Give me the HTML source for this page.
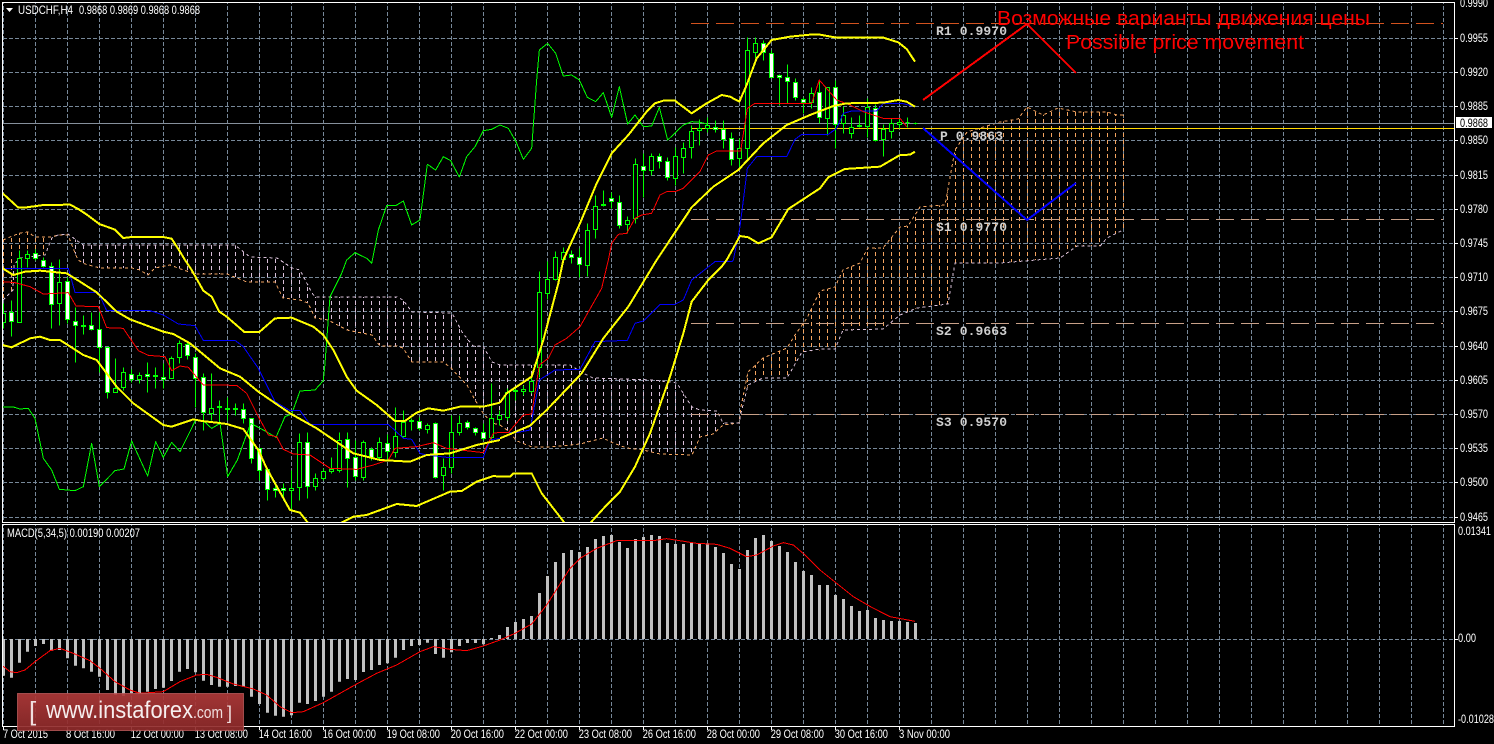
<!DOCTYPE html>
<html lang="en">
<head>
<meta charset="utf-8">
<title>USDCHF,H4</title>
<style>
html,body{margin:0;padding:0;background:#000;width:1494px;height:744px;overflow:hidden}
svg{display:block}
text{font-family:"Liberation Sans",sans-serif}
.ax{font-size:12px;fill:#fff}
.pv{font-family:"Liberation Mono",monospace;font-size:13px;font-weight:bold;fill:#d0d0d0}
polyline,.n{fill:none}
polyline{shape-rendering:crispEdges}
.y{stroke:#ff0;stroke-width:6;stroke-linejoin:round}
.r{stroke:#f00;stroke-width:3;stroke-linejoin:round}
.b{stroke:#00f;stroke-width:3;stroke-linejoin:round}
.g{stroke:#0f0;stroke-width:3;stroke-linejoin:round}
</style>
</head>
<body>
<svg width="1494" height="744" viewBox="0 0 1494 744" xmlns="http://www.w3.org/2000/svg">
<defs>
<pattern id="vg" width="32" height="6" patternUnits="userSpaceOnUse"><rect x="3" y="0" width="1" height="4" fill="#778899"/></pattern>
<pattern id="ht" width="8" height="7" patternUnits="userSpaceOnUse"><rect x="3" y="0" width="1" height="4" fill="#d8bfd8"/></pattern>
<pattern id="hs" width="8" height="7" patternUnits="userSpaceOnUse"><rect x="3" y="0" width="1" height="4" fill="#f4a460"/></pattern>
<clipPath id="mc"><rect x="3" y="3" width="1451" height="519"/></clipPath>
<clipPath id="dc"><rect x="3" y="525" width="1451" height="201"/></clipPath>
<linearGradient id="lg" x1="0" y1="0" x2="0" y2="1"><stop offset="0" stop-color="#b03a3a"/><stop offset="1" stop-color="#8e2a2a"/></linearGradient>
</defs>
<rect width="1494" height="744" fill="#000"/>

<!-- grid -->
<rect x="3" y="3" width="1451" height="519" fill="url(#vg)"/>
<rect x="3" y="525" width="1451" height="201" fill="url(#vg)"/>
<path d="M3 38.5H1454M3 72.5H1454M3 106.5H1454M3 140.5H1454M3 175.5H1454M3 209.5H1454M3 243.5H1454M3 277.5H1454M3 311.5H1454M3 346.5H1454M3 380.5H1454M3 414.5H1454M3 448.5H1454M3 482.5H1454M3 517.5H1454M3 639.5H1454" stroke="#778899" stroke-dasharray="4 2" class="n"/>

<g clip-path="url(#mc)">
<!-- cloud hatch -->
<polygon fill="url(#hs)" points="3,240 10,237 20,233 28,232 35,237 52,237 52,238 45,255 20,258 14,265 13,290 3,300"/>
<polygon fill="url(#ht)" points="52,237 58,235 68,234 83,245 235,245 250,257 277,258 292,268 300,270 312,293 315,297 397,297 403,300 412,312 452,313 462,332 473,346 483,346 492,362 500,365 570,365 583,373 593,378 653,380 677,383 683,393 692,407 700,410 717,411 723,423 739,423 723,425 713,434 700,437 692,455 660,454 643,450 627,448 613,443 603,438 580,444 550,447 532,447 517,441 507,430 500,425 492,423 483,413 475,400 467,385 450,367 443,362 412,362 403,348 397,346 380,346 372,335 347,330 328,320 315,318 308,303 300,300 283,298 275,282 247,282 227,274 195,274 178,268 170,265 155,268 148,275 140,270 132,268 100,268 85,264 78,260 75,253 68,234"/>
<polygon fill="url(#hs)" points="739,423 741,407 748,372 763,358 787,348 795,335 807,318 820,291 835,287 843,270 860,263 863,257 868,248 883,248 900,227 908,226 920,207 945,205 955,150 967,132 1000,122 1018,119 1027,107 1043,115 1058,108 1077,112 1107,112 1117,115 1124,115 1124,230 1107,238 1100,246 1077,246 1060,258 1000,263 955,263 948,304 917,308 900,315 883,329 843,330 835,349 802,352 787,378 763,378 748,385 741,413"/>
<!-- cloud edges -->
<polyline stroke="#f4a460" stroke-dasharray="3 3" points="3,240 10,237 20,233 28,232 35,237 43,237 52,237 58,235 68,235 75,253 78,260 85,264 100,268 132,268 140,270 148,275 155,268 170,265 178,268 195,274 227,274 247,282 275,282 283,298 300,300 308,303 315,318 328,320 347,330 372,335 380,346 397,346 403,348 412,362 443,362 450,367 467,385 475,400 483,413 492,423 500,425 507,430 517,441 532,447 550,447 580,444 603,438 613,443 627,448 643,450 660,454 692,455 700,437 713,434 723,425 739,423 741,407 748,372 763,358 787,348 795,335 807,318 820,291 835,287 843,270 860,263 863,257 868,248 883,248 900,227 908,226 920,207 945,205 955,150 967,132 1000,122 1018,119 1027,107 1043,115 1058,108 1077,112 1107,112 1117,115 1123,115"/>
<polyline stroke="#d8bfd8" stroke-dasharray="3 3" points="3,300 13,290 14,265 20,258 45,255 52,238 58,235 68,234 83,245 235,245 250,257 277,258 292,268 300,270 312,293 315,297 397,297 403,300 412,312 452,313 462,332 473,346 483,346 492,362 500,365 570,365 583,373 593,378 653,380 677,383 683,393 692,407 700,410 717,411 723,423 739,423 741,413 748,385 763,378 787,378 802,352 820,349 835,349 843,330 883,329 900,315 917,308 948,304 955,263 1000,263 1060,258 1077,246 1100,246 1107,238 1123,230"/>
</g>

<!-- pivot and price lines -->
<g shape-rendering="crispEdges">
<path d="M691 23.5H1443" stroke="#d2521e" stroke-dasharray="18 7" class="n"/>
<path d="M691 219.5H1443M691 323.5H1443M691 414.5H1443" stroke="#c8a088" stroke-dasharray="18 7" class="n"/>
<path d="M3 123.5H1454" stroke="#86909c" class="n"/>
<path d="M691 128.5H1454" stroke="#ffd700" class="n"/>
</g>

<text class="pv" x="936" y="35" xml:space="preserve" textLength="71">R1 0.9970</text>
<text class="pv" x="940" y="140" textLength="63">P 0.9863</text>
<text class="pv" x="936" y="231" textLength="71">S1 0.9770</text>
<text class="pv" x="936" y="335" textLength="71">S2 0.9663</text>
<text class="pv" x="936" y="426" textLength="71">S3 0.9570</text>

<g clip-path="url(#mc)">
<!-- candles -->
<g transform="translate(.5,.5)" shape-rendering="crispEdges">
<path class="n" stroke="#0f0" d="M3 303V328M11 300V336M19 250V322M27 250V267M35 249V260M43 257V267M51 262V328M59 259V325M67 277V323M75 307V362M83 315V334M91 312V330M99 312V372M107 347V398M115 358V392M123 367V390M131 369V382M139 372V383M147 362V392M155 367V388M163 363V388M171 356V378M179 340V363M187 341V359M195 353V407M203 373V430M211 373V420M219 400V423M227 397V420M235 403V415M243 403V423M251 418V463M259 448V480M267 469V500M275 483V497M283 483V500M291 470V510M299 433V500M307 432V498M315 473V490M323 468V480M331 457V473M339 432V472M347 432V487M355 440V480M363 440V480M371 447V460M379 437V460M387 434V460M395 407V457M403 410V437M411 418V430M419 417V430M427 423V433M435 422V478M443 458V490M451 415V473M459 415V435M467 420V429M475 427V435M483 423V440M491 383V442M499 410V425M507 388V420M515 387V400M523 385V395M531 377V393M539 271V377M547 261V299M555 251V280M563 247V262M571 250V263M579 248V277M587 223V276M595 195V238M603 190V206M611 192V208M619 195V228M627 216V233M635 158V223M643 153V197M651 153V175M659 153V168M667 157V180M675 147V185M683 142V173M691 125V158M699 119V145M707 117V132M715 120V132M723 120V148M731 132V165M739 138V167M747 37V160M755 37V58M763 40V60M771 50V77M779 74V105M787 64V103M795 78V100M803 97V113M811 87V108M819 80V123M827 87V135M835 80V148M843 106V133M851 117V138M859 115V127M867 98V137M875 104V141M883 124V156M891 118V138M899 118V128M907 117V127M915 122V124M905 122H909M913 123H917"/>
<path fill="#000" stroke="#0f0" d="M1 313h4V322h-4zM17 258h4V322h-4zM25 254h4V258h-4zM57 282h4V303h-4zM113 388h4V392h-4zM121 372h4V387h-4zM137 375h4V379h-4zM169 358h4V378h-4zM177 343h4V357h-4zM209 408h4V413h-4zM289 488h4V490h-4zM297 442h4V487h-4zM313 478h4V486h-4zM321 471h4V478h-4zM329 469h4V471h-4zM337 440h4V470h-4zM361 442h4V477h-4zM377 442h4V457h-4zM393 436h4V452h-4zM401 422h4V436h-4zM425 425h4V429h-4zM441 467h4V475h-4zM449 432h4V467h-4zM457 423h4V432h-4zM489 418h4V437h-4zM497 415h4V419h-4zM505 392h4V417h-4zM521 389h4V391h-4zM529 381h4V391h-4zM537 292h4V367h-4zM545 279h4V293h-4zM553 257h4V279h-4zM561 252h4V259h-4zM585 230h4V265h-4zM593 206h4V229h-4zM601 204h4V205h-4zM625 220h4V224h-4zM633 164h4V218h-4zM649 156h4V170h-4zM673 156h4V178h-4zM681 148h4V157h-4zM689 131h4V147h-4zM697 128h4V130h-4zM705 125h4V128h-4zM737 148h4V158h-4zM745 50h4V148h-4zM753 43h4V52h-4zM809 93h4V102h-4zM825 87h4V118h-4zM841 115h4V123h-4zM849 127h4V133h-4zM865 107h4V126h-4zM881 129h4V139h-4zM889 123h4V131h-4zM897 122h4V124h-4z"/>
<path fill="#fff" stroke="#0f0" d="M9 312h4V321h-4zM33 253h4V258h-4zM41 260h4V266h-4zM49 266h4V304h-4zM65 281h4V319h-4zM73 321h4V325h-4zM81 325h4V326h-4zM89 325h4V329h-4zM97 329h4V347h-4zM105 347h4V392h-4zM129 374h4V379h-4zM145 374h4V376h-4zM153 375h4V376h-4zM161 377h4V379h-4zM185 344h4V355h-4zM193 357h4V378h-4zM201 377h4V412h-4zM217 406h4V407h-4zM225 408h4V409h-4zM233 408h4V409h-4zM241 409h4V418h-4zM249 418h4V458h-4zM257 448h4V470h-4zM265 469h4V489h-4zM273 488h4V490h-4zM281 488h4V490h-4zM305 442h4V486h-4zM345 439h4V458h-4zM353 457h4V476h-4zM369 449h4V457h-4zM385 443h4V451h-4zM409 420h4V421h-4zM417 421h4V428h-4zM433 423h4V477h-4zM465 422h4V427h-4zM473 428h4V432h-4zM481 432h4V438h-4zM513 390h4V391h-4zM569 254h4V257h-4zM577 257h4V264h-4zM609 198h4V201h-4zM617 202h4V225h-4zM641 166h4V170h-4zM657 156h4V161h-4zM665 161h4V177h-4zM713 127h4V129h-4zM721 129h4V139h-4zM729 138h4V159h-4zM761 43h4V52h-4zM769 53h4V77h-4zM777 75h4V77h-4zM785 77h4V81h-4zM793 82h4V97h-4zM801 99h4V102h-4zM817 92h4V117h-4zM833 87h4V124h-4zM857 125h4V126h-4zM873 108h4V140h-4z"/>
</g>

<!-- frame Z2 (0,260) -->
<g transform="translate(0,260) scale(.33333)">
<polyline class="g" points="8,441 40,441 60,447 85,445 105,475 130,595 155,630 178,688 225,692 250,680 275,550 298,680 345,632 372,627 395,543 443,648 467,545 490,592 515,547 540,575 587,480 610,482 635,505 660,490 683,650 712,600 752,490 790,510 828,532 855,470 875,462 900,393 945,390 970,362 975,310 990,110 1025,40 1040,0"/>
<polyline class="b" points="8,25 205,25 225,97 295,97 320,152 450,152 490,165 535,192 585,197 610,241 705,241 730,260 775,325 825,425 870,452 900,452 930,493 1165,493 1210,535 1235,538 1260,580 1280,585 1340,592 1450,592 1470,540 1500,535"/>
<polyline class="r" points="8,65 45,68 90,80 130,102 205,98 228,138 295,140 320,203 370,205 415,272 445,286 495,290 515,332 540,318 565,322 610,375 710,376 740,400 775,470 805,525 830,530 850,568 880,582 930,585 990,625 1070,628 1120,615 1165,600 1185,565 1250,560 1300,548 1340,565 1450,578 1480,520 1500,517"/>
<polyline class="y" points="555,0 575,30 610,92 635,110 658,155 680,170 733,216 778,216 825,175 875,173 940,200 970,225 1000,270 1040,350 1070,392 1130,435 1185,483 1215,483 1250,458 1285,445 1330,452 1380,440 1450,440 1500,428"/>
<polyline class="y" points="8,25 40,45 75,35 120,32 200,40 240,65 290,97 350,155 390,178 490,215 520,222 570,250 660,325 720,350 775,395 870,460 950,505 1060,580 1140,600 1230,605 1280,585 1350,580 1430,555 1500,540"/>
<polyline class="y" points="8,255 35,262 90,235 120,230 150,240 180,240 250,285 290,300 320,340 350,380 400,430 490,495 515,500 580,478 605,483 650,488 680,492 730,507 775,570 800,625 870,750 900,758 925,790"/>
<polyline class="y" points="1020,790 1060,770 1100,765 1190,732 1250,738 1350,695 1385,693 1430,665 1480,648 1500,650"/>
</g>

<!-- frame Z1 (0,0) -->
<g transform="scale(.33333)">
<polyline class="g" points="1040,780 1065,758 1100,775 1115,790 1135,690 1160,617 1187,617 1210,603 1235,675 1260,660 1282,493 1307,510 1330,470 1352,482 1378,531 1400,470 1425,440 1450,392 1475,388 1500,375"/>
<polyline class="y" points="8,580 55,623 80,622 130,615 210,614 235,627 262,645 298,672 345,689 370,714 395,711 490,711 515,716 540,755 555,780"/>
</g>

<!-- frame Z5 (500,260) -->
<g transform="translate(500,260) scale(.33333)">
<polyline class="b" points="0,518 50,518 90,510 118,360 165,330 240,328 285,245 382,241 405,190 430,183 480,133 525,133 550,120 575,60 645,5 695,5 700,0"/>
<polyline class="r" points="0,518 25,518 70,465 95,462 118,315 145,295 165,255 200,235 240,200 305,85 325,0"/>
<polyline class="y" points="0,428 20,400 95,350 130,240 175,70 190,0"/>
<polyline class="y" points="0,535 90,497 140,450 245,340 310,235 385,140 470,0"/>
<polyline class="y" points="0,650 30,650 40,640 95,640 125,700 195,790"/>
<polyline class="y" points="270,790 320,735 360,695 405,620 450,520 510,350 550,220 575,125 625,60 665,20 680,0"/>
</g>

<!-- frame Z3 (500,0) -->
<g transform="translate(500,0) scale(.33333)">
<polyline class="g" points="0,375 25,385 48,425 70,478 95,445 110,240 118,150 143,130 167,160 190,228 215,225 238,240 262,292 287,305 310,278 335,352 358,260 383,372 405,345 430,380 455,378 478,322 503,420 550,375 575,365 600,367 621,372"/>
<polyline class="b" points="700,780 720,680 742,505 770,470 860,470 885,418 905,403 985,403 1010,385 1030,340 1055,333 1130,333 1150,310 1205,310 1245,320"/>
<polyline class="r" points="325,780 335,730 355,703 380,700 405,655 425,645 455,640 480,585 500,575 525,575 550,565 600,515 625,465 650,453 722,453 742,325 765,310 935,310 958,240 1010,300 1050,315 1090,335 1150,355 1200,355 1220,380"/>
<polyline class="y" points="190,780 240,670 290,550 335,460 385,405 440,335 465,310 490,302 525,302 575,340 620,310 665,285 690,290 718,305 740,255 770,175 815,120 870,110 930,104 960,104 1010,113 1150,113 1195,127 1220,147 1245,185"/>
<polyline class="y" points="470,780 575,622 640,560 715,510 790,430 860,375 930,345 1000,318 1040,310 1150,308 1195,300 1220,305 1245,320"/>
<polyline class="y" points="680,780 720,708 745,712 775,730 815,712 865,627 960,565 985,532 1035,507 1140,500 1200,465 1230,464 1245,455"/>
</g>

<!-- trend sketches -->
<polyline stroke="#f00" stroke-width="2" points="923,100 1027,24 1076,73"/>
<polyline stroke="#00f" stroke-width="2" points="923,128 1027,220 1076,183"/>
</g>

<text x="997" y="25" font-size="20" fill="#f00" textLength="373" lengthAdjust="spacingAndGlyphs" style="font-family:'Liberation Sans','DejaVu Sans',sans-serif">Возможные варианты движения цены</text>
<text x="1066" y="49" font-size="20" fill="#f00" textLength="238" lengthAdjust="spacingAndGlyphs">Possible price movement</text>

<!-- MACD -->
<g clip-path="url(#dc)">
<path class="n" stroke="#c0c0c0" stroke-width="3" d="M3.5 639V675.7M11.5 639V677.7M19.5 639V662.7M27.5 639V651.7M35.5 639V646M43.5 639V644M51.5 639V650.7M59.5 639V650M67.5 639V658.3M75.5 639V665.7M83.5 639V668.3M91.5 639V671.7M99.5 639V676.7M107.5 639V690M115.5 639V695M123.5 639V696M131.5 639V693.3M139.5 639V694M147.5 639V691.7M155.5 639V689M163.5 639V687.7M171.5 639V681M179.5 639V671.7M187.5 639V669M195.5 639V672.3M203.5 639V680.7M211.5 639V685M219.5 639V686.7M227.5 639V686.7M235.5 639V686M243.5 639V686.7M251.5 639V696.7M259.5 639V704M267.5 639V712.7M275.5 639V715.7M283.5 639V716.7M291.5 639V715.3M299.5 639V702.7M307.5 639V704M315.5 639V701M323.5 639V696.7M331.5 639V691.7M339.5 639V681.7M347.5 639V679M355.5 639V680M363.5 639V672M371.5 639V670M379.5 639V665M387.5 639V663.3M395.5 639V657.7M403.5 639V650M411.5 639V646M419.5 639V645M427.5 639V642.7M435.5 639V654M443.5 639V657.7M451.5 639V652.3M459.5 639V646M467.5 639V643M475.5 639V643M483.5 639V644.3M491.5 639V638M499.5 639V635M507.5 639V627M515.5 639V622M523.5 639V619M531.5 639V616M539.5 639V593M547.5 639V576M555.5 639V562M563.5 639V553M571.5 639V550M579.5 639V552M587.5 639V547M595.5 639V539M603.5 639V536M611.5 639V535M619.5 639V542M627.5 639V548M635.5 639V539M643.5 639V537M651.5 639V535M659.5 639V536M667.5 639V543M675.5 639V544M683.5 639V544M691.5 639V543M699.5 639V544M707.5 639V543.3M715.5 639V547M723.5 639V553M731.5 639V564M739.5 639V569M747.5 639V550M755.5 639V538M763.5 639V535M771.5 639V541M779.5 639V546M787.5 639V552M795.5 639V562M803.5 639V571M811.5 639V575M819.5 639V585M827.5 639V585M835.5 639V595M843.5 639V599M851.5 639V606M859.5 639V611M867.5 639V610M875.5 639V618M883.5 639V620M891.5 639V621M899.5 639V621M907.5 639V622M915.5 639V623"/>
<g transform="translate(0,520) scale(.33333)">
<polyline class="r" points="8,438 30,455 50,458 75,450 105,425 150,392 180,385 220,400 270,422 300,445 345,485 390,510 420,520 490,515 540,485 590,465 620,463 650,472 700,492 760,507 800,525 840,560 875,578 910,575 970,548 1070,492 1130,460 1190,435 1260,395 1300,380 1350,388 1400,392 1450,378 1500,360"/>
</g>
<g transform="translate(500,520) scale(.33333)">
<polyline class="r" points="0,360 45,340 95,312 140,255 175,200 210,145 240,115 290,85 350,62 460,62 500,56 590,70 650,73 690,85 740,110 770,105 820,78 850,68 880,75 915,105 960,150 1010,190 1060,230 1115,262 1170,290 1245,304"/>
</g>
</g>

<!-- frames and ticks -->
<g shape-rendering="crispEdges">
<path class="n" stroke="#fff" d="M2.5 2.5H1454.5V522.5H2.5ZM2.5 524.5H1454.5V726.5H2.5Z"/>
<path class="n" stroke="#fff" d="M1455 38.5h3M1455 72.5h3M1455 106.5h3M1455 140.5h3M1455 175.5h3M1455 209.5h3M1455 243.5h3M1455 277.5h3M1455 311.5h3M1455 346.5h3M1455 380.5h3M1455 414.5h3M1455 448.5h3M1455 482.5h3M1455 517.5h3M1455 639.5h3M3.5 727v3M67.5 727v3M131.5 727v3M195.5 727v3M259.5 727v3M323.5 727v3M387.5 727v3M451.5 727v3M515.5 727v3M579.5 727v3M643.5 727v3M707.5 727v3M771.5 727v3M835.5 727v3M899.5 727v3"/>
</g>

<!-- header labels -->
<polygon points="6,8 13,8 9.5,12" fill="#fff"/>
<text class="ax" x="18" y="14" textLength="55" lengthAdjust="spacingAndGlyphs">USDCHF,H4</text>
<text class="ax" x="79" y="14" textLength="121" lengthAdjust="spacingAndGlyphs">0.9868 0.9869 0.9868 0.9868</text>
<text class="ax" x="7" y="537" textLength="133" lengthAdjust="spacingAndGlyphs">MACD(5,34,5) 0.00190 0.00207</text>

<!-- price axis -->
<g>
<text class="ax" x="1460" y="7" textLength="28" lengthAdjust="spacingAndGlyphs">0.9990</text>
<text class="ax" x="1460" y="42" textLength="28" lengthAdjust="spacingAndGlyphs">0.9955</text>
<text class="ax" x="1460" y="76" textLength="28" lengthAdjust="spacingAndGlyphs">0.9920</text>
<text class="ax" x="1460" y="110" textLength="28" lengthAdjust="spacingAndGlyphs">0.9885</text>
<text class="ax" x="1460" y="144" textLength="28" lengthAdjust="spacingAndGlyphs">0.9850</text>
<text class="ax" x="1460" y="179" textLength="28" lengthAdjust="spacingAndGlyphs">0.9815</text>
<text class="ax" x="1460" y="213" textLength="28" lengthAdjust="spacingAndGlyphs">0.9780</text>
<text class="ax" x="1460" y="247" textLength="28" lengthAdjust="spacingAndGlyphs">0.9745</text>
<text class="ax" x="1460" y="281" textLength="28" lengthAdjust="spacingAndGlyphs">0.9710</text>
<text class="ax" x="1460" y="315" textLength="28" lengthAdjust="spacingAndGlyphs">0.9675</text>
<text class="ax" x="1460" y="350" textLength="28" lengthAdjust="spacingAndGlyphs">0.9640</text>
<text class="ax" x="1460" y="384" textLength="28" lengthAdjust="spacingAndGlyphs">0.9605</text>
<text class="ax" x="1460" y="418" textLength="28" lengthAdjust="spacingAndGlyphs">0.9570</text>
<text class="ax" x="1460" y="452" textLength="28" lengthAdjust="spacingAndGlyphs">0.9535</text>
<text class="ax" x="1460" y="486" textLength="28" lengthAdjust="spacingAndGlyphs">0.9500</text>
<text class="ax" x="1460" y="521" textLength="28" lengthAdjust="spacingAndGlyphs">0.9465</text>
</g>
<rect x="1456" y="117" width="36" height="11" fill="#fff"/>
<text x="1460" y="127" font-size="12" fill="#000" textLength="28" lengthAdjust="spacingAndGlyphs">0.9868</text>
<text class="ax" x="1458" y="535" textLength="33" lengthAdjust="spacingAndGlyphs">0.01341</text>
<text class="ax" x="1458" y="642" textLength="18" lengthAdjust="spacingAndGlyphs">0.00</text>
<text class="ax" x="1458" y="723" textLength="36" lengthAdjust="spacingAndGlyphs">-0.01028</text>

<!-- time axis -->
<text class="ax" x="3" y="738" textLength="45" lengthAdjust="spacingAndGlyphs">7 Oct 2015</text>
<text class="ax" x="66" y="738" textLength="49" lengthAdjust="spacingAndGlyphs">8 Oct 16:00</text>
<text class="ax" x="130.7" y="738" textLength="53.3" lengthAdjust="spacingAndGlyphs">12 Oct 00:00</text>
<text class="ax" x="194.7" y="738" textLength="53.3" lengthAdjust="spacingAndGlyphs">13 Oct 08:00</text>
<text class="ax" x="258.7" y="738" textLength="53.3" lengthAdjust="spacingAndGlyphs">14 Oct 16:00</text>
<text class="ax" x="322.7" y="738" textLength="53.3" lengthAdjust="spacingAndGlyphs">16 Oct 00:00</text>
<text class="ax" x="386.7" y="738" textLength="53.3" lengthAdjust="spacingAndGlyphs">19 Oct 08:00</text>
<text class="ax" x="450.7" y="738" textLength="53.3" lengthAdjust="spacingAndGlyphs">20 Oct 16:00</text>
<text class="ax" x="514.7" y="738" textLength="53.3" lengthAdjust="spacingAndGlyphs">22 Oct 00:00</text>
<text class="ax" x="578.7" y="738" textLength="53.3" lengthAdjust="spacingAndGlyphs">23 Oct 08:00</text>
<text class="ax" x="642.7" y="738" textLength="53.3" lengthAdjust="spacingAndGlyphs">26 Oct 16:00</text>
<text class="ax" x="706.7" y="738" textLength="53.3" lengthAdjust="spacingAndGlyphs">28 Oct 00:00</text>
<text class="ax" x="770.7" y="738" textLength="53.3" lengthAdjust="spacingAndGlyphs">29 Oct 08:00</text>
<text class="ax" x="834.7" y="738" textLength="53.3" lengthAdjust="spacingAndGlyphs">30 Oct 16:00</text>
<text class="ax" x="899" y="738" textLength="51" lengthAdjust="spacingAndGlyphs">3 Nov 00:00</text>

<!-- logo -->
<rect x="17.5" y="693.5" width="226" height="37" fill="url(#lg)" fill-opacity=".92" stroke="#b85a5a" stroke-opacity=".8"/>
<text x="29" y="720" font-size="26" fill="#f0dede">[</text>
<text x="46" y="718" font-size="24" fill="#f6eeee" textLength="147" lengthAdjust="spacingAndGlyphs">www.instaforex</text>
<text x="193" y="718" font-size="17" fill="#f0dede" textLength="30" lengthAdjust="spacingAndGlyphs">.com</text>
<text x="227" y="719" font-size="18" fill="#f0dede">]</text>
</svg>
</body>
</html>
